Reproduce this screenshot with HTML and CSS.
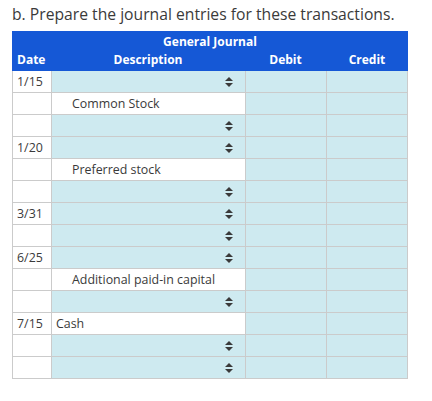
FILE: index.html
```html
<!DOCTYPE html>
<html>
<head>
<meta charset="utf-8">
<link rel="stylesheet" href="styles.css">
</head>
<body>
<div class="page">
  <p class="title">b. Prepare the journal entries for these transactions.</p>
  <div class="journal">
    <div class="head">
      <div class="head-title">General Journal</div>
      <div class="head-cols">
        <div class="hc hc-date">Date</div>
        <div class="hc">Description</div>
        <div class="hc">Debit</div>
        <div class="hc">Credit</div>
      </div>
    </div>
    <div class="grid">
      <div class="date">1/15</div><div class="sel"><svg class="arr" viewBox="0 0 8 10"><polygon points="0,4 4,0 8,4"/><polygon points="0,6 8,6 4,10"/></svg></div><div class="num"></div><div class="num"></div>
      <div class="date"></div><div class="txt indent">Common Stock</div><div class="num"></div><div class="num"></div>
      <div class="date"></div><div class="sel"><svg class="arr" viewBox="0 0 8 10"><polygon points="0,4 4,0 8,4"/><polygon points="0,6 8,6 4,10"/></svg></div><div class="num"></div><div class="num"></div>
      <div class="date">1/20</div><div class="sel"><svg class="arr" viewBox="0 0 8 10"><polygon points="0,4 4,0 8,4"/><polygon points="0,6 8,6 4,10"/></svg></div><div class="num"></div><div class="num"></div>
      <div class="date"></div><div class="txt indent">Preferred stock</div><div class="num"></div><div class="num"></div>
      <div class="date"></div><div class="sel"><svg class="arr" viewBox="0 0 8 10"><polygon points="0,4 4,0 8,4"/><polygon points="0,6 8,6 4,10"/></svg></div><div class="num"></div><div class="num"></div>
      <div class="date">3/31</div><div class="sel"><svg class="arr" viewBox="0 0 8 10"><polygon points="0,4 4,0 8,4"/><polygon points="0,6 8,6 4,10"/></svg></div><div class="num"></div><div class="num"></div>
      <div class="date"></div><div class="sel"><svg class="arr" viewBox="0 0 8 10"><polygon points="0,4 4,0 8,4"/><polygon points="0,6 8,6 4,10"/></svg></div><div class="num"></div><div class="num"></div>
      <div class="date">6/25</div><div class="sel"><svg class="arr" viewBox="0 0 8 10"><polygon points="0,4 4,0 8,4"/><polygon points="0,6 8,6 4,10"/></svg></div><div class="num"></div><div class="num"></div>
      <div class="date"></div><div class="txt indent">Additional paid-in capital</div><div class="num"></div><div class="num"></div>
      <div class="date"></div><div class="sel"><svg class="arr" viewBox="0 0 8 10"><polygon points="0,4 4,0 8,4"/><polygon points="0,6 8,6 4,10"/></svg></div><div class="num"></div><div class="num"></div>
      <div class="date">7/15</div><div class="txt">Cash</div><div class="num"></div><div class="num"></div>
      <div class="date"></div><div class="sel"><svg class="arr" viewBox="0 0 8 10"><polygon points="0,4 4,0 8,4"/><polygon points="0,6 8,6 4,10"/></svg></div><div class="num"></div><div class="num"></div>
      <div class="date"></div><div class="sel"><svg class="arr" viewBox="0 0 8 10"><polygon points="0,4 4,0 8,4"/><polygon points="0,6 8,6 4,10"/></svg></div><div class="num"></div><div class="num"></div>
    </div>
  </div>
</div>
</body>
</html>
```

FILE: styles.css
```css
html, body {
  margin: 0;
  padding: 0;
  background: #fff;
}
body {
  font-family: "Open Sans", "Liberation Sans", sans-serif;
  color: #3a3a3a;
}
.page {
  padding: 0 12px;
  width: 396px;
}
.title {
  margin: 0;
  height: 31px;
  font-size: 15.7px;
  line-height: 28px;
  color: #3a3a3a;
}
.head {
  background: #1558d6;
  color: #fff;
  font-weight: 700;
  font-size: 12px;
  height: 40px;
}
.head-title {
  text-align: center;
  height: 20px;
  line-height: 22px;
}
.head-cols {
  display: grid;
  grid-template-columns: 39px 194px 81px 82px;
  height: 20px;
  line-height: 18px;
}
.hc {
  text-align: center;
}
.hc-date {
  text-align: left;
  padding-left: 5px;
}
.grid {
  display: grid;
  grid-template-columns: 38px 193px 80px 80px;
  grid-auto-rows: 21px;
  gap: 1px;
  padding: 0 1px 1px 1px;
  background: #cbcbcb;
  font-size: 12.4px;
}
.grid > div {
  line-height: 21px;
  white-space: nowrap;
}
.date {
  background: #fff;
  padding-left: 4px;
}
.txt {
  background: #fff;
  padding-left: 4px;
}
.indent {
  padding-left: 20px;
}
.sel {
  background: #ceeaf0;
  display: flex;
  align-items: center;
  justify-content: flex-end;
  padding-right: 12px;
}
.num {
  background: #ceeaf0;
}
.arr {
  width: 8px;
  height: 10px;
  fill: #3a3a3a;
}
```
